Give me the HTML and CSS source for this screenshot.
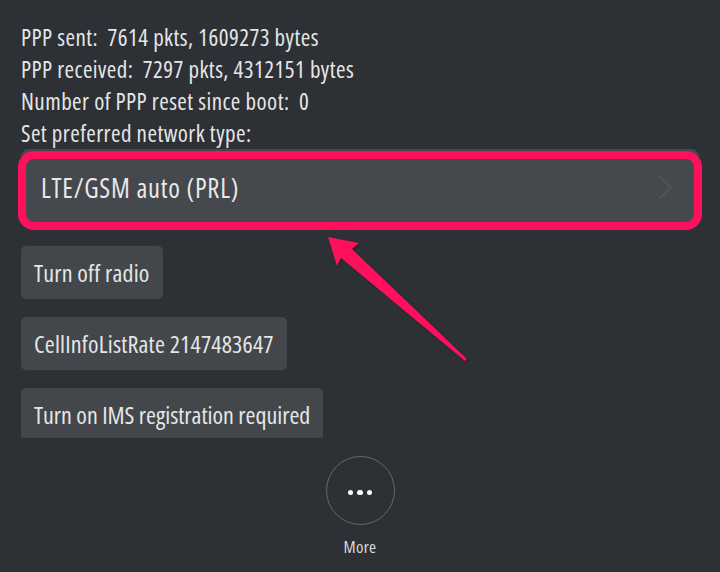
FILE: index.html
```html
<!DOCTYPE html>
<html>
<head>
<meta charset="utf-8">
<link rel="stylesheet" href="styles.css">
</head>
<body>
<div class="screen">
  <div class="scroll">
    <p class="info">PPP sent:&nbsp; 7614 pkts, 1609273 bytes</p>
    <p class="info">PPP received:&nbsp; 7297 pkts, 4312151 bytes</p>
    <p class="info">Number of PPP reset since boot:&nbsp; 0</p>
    <p class="info">Set preferred network type:</p>
    <div class="dropdown">
      <span class="dropdown-label">LTE/GSM auto (PRL)</span>
      <svg class="chevron" width="16" height="26" viewBox="0 0 16 26"><path d="M2 1 L14 12.5 L2 24" fill="none" stroke="#515458" stroke-width="2"/></svg>
      <div class="highlight"></div>
    </div>
    <div class="buttons">
      <button class="btn">Turn off radio</button>
      <button class="btn">CellInfoListRate 2147483647</button>
      <button class="btn btn-wide">Turn on IMS registration required</button>
    </div>
  </div>
  <div class="more-bar">
    <div class="more-circle">
      <span class="dot"></span><span class="dot"></span><span class="dot"></span>
    </div>
    <span class="more-label">More</span>
  </div>
  <svg class="arrow" width="720" height="572" viewBox="0 0 720 572">
    <polygon points="328,237 359,243 352,249 467,359 465,361 341,258 337,266" fill="#fe105c"/>
  </svg>
</div>
</body>
</html>
```

FILE: styles.css
```css
html, body {
  margin: 0;
  padding: 0;
  background: #2d3135;
}
.screen {
  position: relative;
  width: 720px;
  height: 572px;
  overflow: hidden;
  background: #2d3135;
  font-family: "Open Sans", "Roboto Condensed", sans-serif;
  font-stretch: 75%;
  color: #e6e6e6;
}
.scroll {
  height: 417px;
  overflow: hidden;
  padding: 21px 0 0 21px;
}
.info {
  margin: 0;
  font-size: 23px;
  letter-spacing: 0.45px;
  line-height: 32px;
  white-space: nowrap;
}
.dropdown {
  position: relative;
  width: 678px;
  height: 78px;
  box-sizing: border-box;
  background: #45484d;
  border-radius: 8px;
  display: flex;
  align-items: center;
  padding: 0 26px 0 20px;
}
.dropdown-label {
  font-size: 26.5px;
  letter-spacing: 0.8px;
  color: #e8e8e8;
}
.chevron {
  margin-left: auto;
}
.highlight {
  position: absolute;
  left: -3px;
  top: 2px;
  right: -3px;
  bottom: -3px;
  border: 8px solid #fe105c;
  border-radius: 16px;
}
.buttons {
  display: flex;
  flex-direction: column;
  align-items: flex-start;
  gap: 18px;
  margin-top: 19px;
}
.btn {
  height: 53px;
  padding: 0 13px;
  border: none;
  border-radius: 5px;
  background: #43464b;
  color: #e6e6e6;
  font-family: inherit;
  font-stretch: inherit;
  font-size: 24px;
  letter-spacing: 0.2px;
  white-space: nowrap;
}
.btn-wide {
  letter-spacing: 0;
}
.more-bar {
  height: 134px;
  display: flex;
  flex-direction: column;
  align-items: center;
}
.more-circle {
  margin-top: 18px;
  width: 69px;
  height: 69px;
  box-sizing: border-box;
  border: 1px solid #65686c;
  border-radius: 50%;
  display: flex;
  align-items: center;
  justify-content: center;
  gap: 4px;
  padding-top: 4px;
}
.dot {
  width: 5.5px;
  height: 5.5px;
  border-radius: 50%;
  background: #ffffff;
}
.more-label {
  margin-top: 11px;
  font-size: 17px;
  letter-spacing: 0.3px;
  line-height: 22px;
  color: #d8d8d8;
}
.arrow {
  position: absolute;
  left: 0;
  top: 0;
  pointer-events: none;
  filter: drop-shadow(1px 1px 1px rgba(0,0,0,0.35));
}
```
